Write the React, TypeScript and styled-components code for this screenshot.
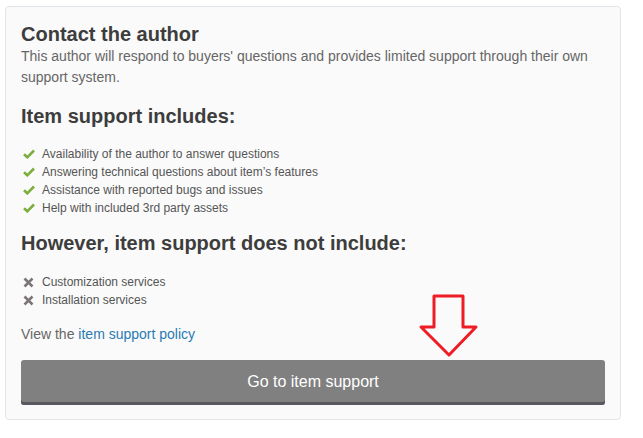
import React from "react";
import styled, { createGlobalStyle } from "styled-components";

const GlobalStyle = createGlobalStyle`
  body {
    margin: 0;
    background: #ffffff;
    font-family: "Liberation Sans", Arial, sans-serif;
  }
`;

const Page = styled.div`
  padding: 6px 22px 0 5px;
`;

const Card = styled.div`
  width: 616px;
  box-sizing: border-box;
  background: #fafafa;
  border: 1px solid #e1e6ea;
  border-radius: 4px;
  padding: 15px 15px 14px 15px;
`;

const Title = styled.h2`
  margin: 0;
  font-size: 20px;
  line-height: 24px;
  font-weight: bold;
  color: #3d3d3d;
`;

const Intro = styled.p`
  margin: 0 0 16px;
  font-size: 14px;
  line-height: 21px;
  color: #666666;
`;

const Heading = styled.h3<{ $gap: number }>`
  margin: 0 0 ${(p) => p.$gap}px;
  font-size: 20px;
  line-height: 24px;
  font-weight: bold;
  color: #3d3d3d;
`;

const List = styled.ul`
  list-style: none;
  margin: 0 0 14px;
  padding: 0;
`;

const Item = styled.li`
  display: flex;
  align-items: center;
  gap: 7px;
  font-size: 12px;
  line-height: 18px;
  color: #555555;
`;

const IconBox = styled.span`
  display: inline-flex;
  width: 13px;
  justify-content: center;
  margin-left: 1px;
`;

const PolicyLine = styled.p`
  margin: 15px 0 15px;
  font-size: 14px;
  line-height: 21px;
  color: #666666;
`;

const Link = styled.a`
  color: #2a7ab3;
  text-decoration: none;
`;

const ButtonArea = styled.div`
  position: relative;
`;

const SupportButton = styled.button`
  display: block;
  width: 100%;
  height: 45px;
  border: none;
  border-radius: 3px;
  background: #808080;
  box-shadow: inset 0 -3px 0 #58585e;
  color: #ffffff;
  font-family: "Liberation Sans", Arial, sans-serif;
  font-size: 16px;
  padding: 0 0 2px;
  cursor: pointer;
`;

const Arrow = styled.svg`
  position: absolute;
  left: 397px;
  top: -66px;
`;

const Check = () => (
  <IconBox>
    <svg width="12" height="10" viewBox="0 0 12 10">
      <path d="M1 5.2 L4.3 8.3 L11 1.5" fill="none" stroke="#7cae3c" strokeWidth="2.6" />
    </svg>
  </IconBox>
);

const Cross = () => (
  <IconBox>
    <svg width="11" height="11" viewBox="0 0 11 11">
      <path d="M1.5 1.5 L9.5 9.5 M9.5 1.5 L1.5 9.5" stroke="#7d7476" strokeWidth="2.5" />
    </svg>
  </IconBox>
);

const included = [
  "Availability of the author to answer questions",
  "Answering technical questions about item\u2019s features",
  "Assistance with reported bugs and issues",
  "Help with included 3rd party assets",
];

const excluded = ["Customization services", "Installation services"];

export default function App() {
  return (
    <>
      <GlobalStyle />
      <Page>
        <Card>
          <Title>Contact the author</Title>
          <Intro>
            This author will respond to buyers' questions and provides limited support through their own
            support system.
          </Intro>

          <Heading $gap={17}>Item support includes:</Heading>
          <List>
            {included.map((t) => (
              <Item key={t}>
                <Check />
                {t}
              </Item>
            ))}
          </List>

          <Heading $gap={18}>However, item support does not include:</Heading>
          <List>
            {excluded.map((t) => (
              <Item key={t}>
                <Cross />
                {t}
              </Item>
            ))}
          </List>

          <PolicyLine>
            View the <Link href="#">item support policy</Link>
          </PolicyLine>

          <ButtonArea>
            <Arrow width="62" height="64" viewBox="0 0 62 64">
              <path
                d="M16 2 H45 V33 H58 L31 61 L3 33 H16 Z"
                fill="none"
                stroke="#ee1c25"
                strokeWidth="3"
                strokeLinejoin="round"
              />
            </Arrow>
            <SupportButton>Go to item support</SupportButton>
          </ButtonArea>
        </Card>
      </Page>
    </>
  );
}
